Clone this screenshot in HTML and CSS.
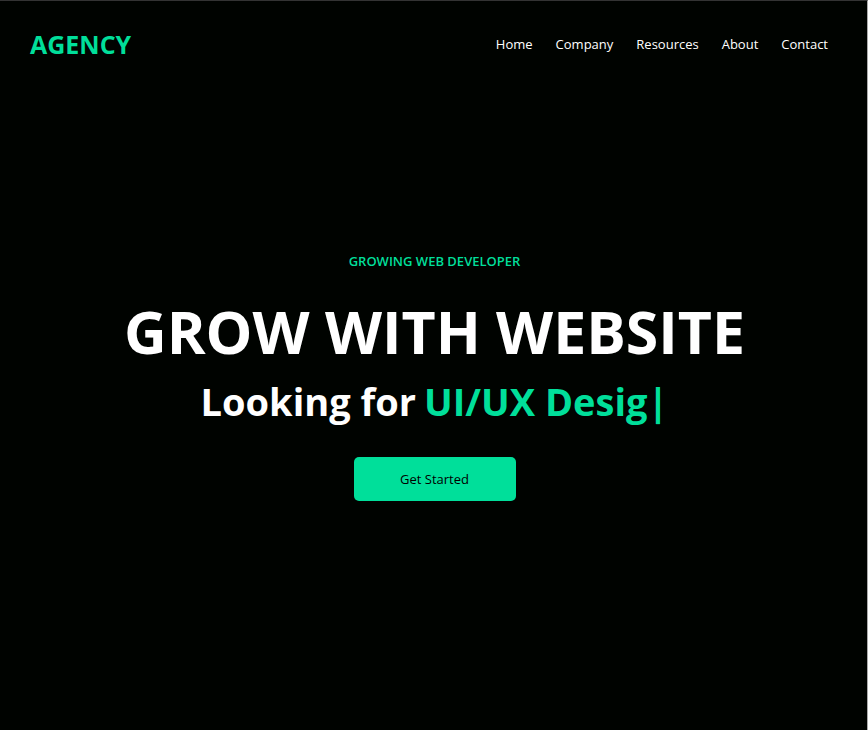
FILE: index.html
```html
<!DOCTYPE html>
<html lang="en">
<head>
<meta charset="utf-8">
<meta name="viewport" content="width=device-width, initial-scale=1">
<title>Agency</title>
<link rel="stylesheet" href="styles.css">
</head>
<body>
<header class="header">
  <a class="logo" href="#">AGENCY</a>
  <nav class="nav">
    <a href="#">Home</a>
    <a href="#">Company</a>
    <a href="#">Resources</a>
    <a href="#">About</a>
    <a href="#">Contact</a>
  </nav>
</header>
<main class="hero">
  <p class="eyebrow">GROWING WEB DEVELOPER</p>
  <h1 class="title">GROW WITH WEBSITE</h1>
  <h2 class="tagline"><span>Looking for</span> <span class="typed">UI/UX Desig|</span></h2>
  <button class="cta" type="button">Get Started</button>
</main>
</body>
</html>
```
FILE: styles.css
```css
* {
  box-sizing: border-box;
  margin: 0;
  padding: 0;
}

body {
  min-height: 100vh;
  display: flex;
  flex-direction: column;
  border-top: 1px solid #333;
  border-right: 1px solid #aaa;
  background: #000300;
  color: #fff;
  font-family: "Open Sans", "Noto Sans", sans-serif;
}

.header {
  display: flex;
  justify-content: space-between;
  align-items: center;
  height: 86px;
  padding: 0 39px 0 30px;
}

.logo {
  color: #00df9a;
  font-size: 25px;
  font-weight: 700;
  text-decoration: none;
}

.nav {
  display: flex;
  gap: 23px;
}

.nav a {
  color: #fff;
  font-size: 13px;
  text-decoration: none;
}

.hero {
  flex: 1;
  display: flex;
  flex-direction: column;
  align-items: center;
  padding: 164px 0 0 2px;
  text-align: center;
}

.eyebrow {
  color: #00df9a;
  font-size: 13px;
  line-height: 20px;
  font-weight: 600;
}

.title {
  margin-top: 20px;
  font-size: 59px;
  line-height: 80px;
  font-weight: 700;
}

.tagline {
  display: flex;
  flex-wrap: wrap;
  justify-content: center;
  column-gap: 8px;
  font-size: 38px;
  line-height: 60px;
  font-weight: 700;
}

.typed {
  color: #00df9a;
}

.cta {
  width: 162px;
  height: 44px;
  margin-top: 26px;
  border: 0;
  border-radius: 5px;
  background: #00df9a;
  color: #000;
  font-family: inherit;
  font-size: 13px;
}
```
